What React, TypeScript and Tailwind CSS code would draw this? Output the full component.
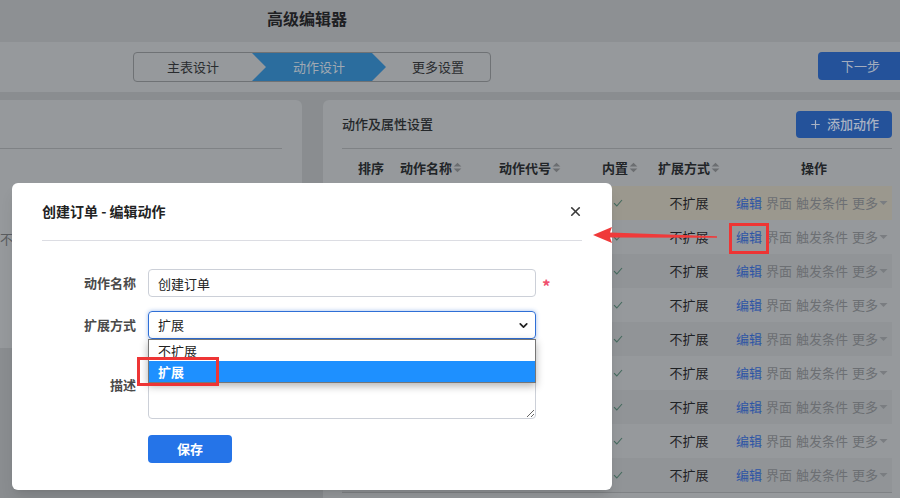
import { X, ChevronDown, Plus } from "lucide-react";

const rows = [0, 1, 2, 3, 4, 5, 6, 7, 8];

const SortIcon = () => (
  <svg width="9" height="11" viewBox="0 0 9 11" className="ml-[1px] inline-block">
    <path d="M4.5 0.8 L8.3 4.6 H0.7 Z" fill="#6b6e71" />
    <path d="M4.5 10.2 L8.3 6.4 H0.7 Z" fill="#6b6e71" />
  </svg>
);

const Check = () => (
  <svg width="10" height="8" viewBox="0 0 10 8">
    <polyline points="1,4.2 3.8,7 9,1" fill="none" stroke="#456a5e" strokeWidth="1.1" />
  </svg>
);

const App = () => {
  return (
    <div className="relative h-[498px] w-[900px] overflow-hidden bg-[#8a8d90] font-['Noto_Sans_CJK_SC',sans-serif] text-[13px] text-[#1f2225]">
      {/* top title */}
      <header className="flex h-[42px] bg-[#8d9093]">
        <div className="flex w-[614px] items-center justify-center pb-[6px] text-[16px] font-bold text-[#1e2023]">
          高级编辑器
        </div>
      </header>

      {/* steps bar */}
      <div className="flex h-[50px] items-start bg-[#96999c] pt-[10px]">
        <div className="ml-[133px] flex h-[30px] w-[358px] overflow-hidden rounded-[4px] border border-[#6f7275]">
          <div className="flex w-[118px] items-center justify-center text-[#2a2c2f]">主表设计</div>
          <div className="flex w-[134px] items-center justify-center bg-[#2b6d9e] text-[#a0a9b2] [clip-path:polygon(0_0,120px_0,134px_50%,120px_100%,0_100%,14px_50%)]">
            动作设计
          </div>
          <div className="flex flex-1 items-center justify-center text-[#2a2c2f]">更多设置</div>
        </div>
        <button className="ml-auto -mr-[3px] flex h-[28px] w-[85px] items-center justify-center rounded-[4px] bg-[#24529a] text-[#a3acbd]">
          下一步
        </button>
      </div>

      {/* content */}
      <div className="flex gap-[21px] pt-[8px]">
        <div className="h-[248px] w-[302px] shrink-0 rounded-r-[6px] bg-[#96999c] pr-[20px]">
          <div className="h-[49px] border-b border-[#7f8285]" />
          <div className="pt-[80px] text-[#5a5d60]">不支持</div>
        </div>

        <div className="h-[420px] w-[588px] shrink-0 rounded-tl-[6px] bg-[#96999c] px-[19px]">
          <div className="flex h-[49px] items-center justify-between border-b border-[#7f8285]">
            <span className="font-medium text-[#24272a]">动作及属性设置</span>
            <button className="flex h-[27px] w-[96px] items-center justify-center gap-[5px] rounded-[4px] bg-[#24529a] font-medium text-[#a9b2c4]">
              <Plus size={13} strokeWidth={2.2} />
              添加动作
            </button>
          </div>

          <div className="grid h-[37px] grid-cols-[58px_62px_136px_44px_94px_1fr] items-center font-bold text-[#222528]">
            <div className="text-center">排序</div>
            <div className="flex items-center justify-center">动作名称<SortIcon /></div>
            <div className="flex items-center justify-center">动作代号<SortIcon /></div>
            <div className="flex items-center justify-center">内置<SortIcon /></div>
            <div className="flex items-center justify-center">扩展方式<SortIcon /></div>
            <div className="text-center">操作</div>
          </div>

          <div className="border-b border-[#7f8285]">
            {rows.map((i) => (
              <div
                key={i}
                className={
                  i === 0
                    ? "grid h-[34px] grid-cols-[58px_62px_136px_44px_94px_1fr] items-center bg-[#9b988e]"
                    : i % 2 === 0
                      ? "grid h-[34px] grid-cols-[58px_62px_136px_44px_94px_1fr] items-center bg-[#919497]"
                      : "grid h-[34px] grid-cols-[58px_62px_136px_44px_94px_1fr] items-center"
                }
              >
                <div />
                <div />
                <div />
                <div className="flex justify-center pr-[4px]">
                  <Check />
                </div>
                <div className="text-center text-[#1e2124]">不扩展</div>
                <div className="flex items-center gap-[4px] text-[#6c6f73]">
                  <span className="text-[#2d55a5]">编辑</span>
                  <span>界面</span>
                  <span>触发条件</span>
                  <span className="flex items-center">
                    更多
                    <svg width="9" height="6" viewBox="0 0 9 6" className="ml-[1px]">
                      <path d="M0.5 1 H8.5 L4.5 5 Z" fill="#7a7d81" />
                    </svg>
                  </span>
                </div>
              </div>
            ))}
          </div>
        </div>
      </div>

      {/* dialog */}
      <div className="absolute left-[12px] top-[183px] h-[307px] w-[600px] rounded-[6px] bg-white px-[30px] shadow-lg">
        <div className="flex h-[58px] items-center justify-between border-b border-[#dcdde3]">
          <span className="text-[14px] font-bold text-[#222]">创建订单 - 编辑动作</span>
          <X size={15} strokeWidth={2.6} className="-mr-[1px] text-[#3a3a3a]" />
        </div>

        <div className="flex flex-col pt-[28px]">
          <div className="flex items-center">
            <label className="w-[94px] text-right font-bold text-[#4a4a4a]">动作名称</label>
            <input
              readOnly
              value="创建订单"
              className="ml-[12px] h-[28px] w-[388px] rounded-[4px] border border-[#ccd0d8] px-[9px] text-[13px] text-[#222] outline-none"
            />
            <span className="ml-[6px] mt-[4px] text-[17px] font-bold leading-none text-[#f0506e]">*</span>
          </div>

          <div className="mt-[14px] flex items-center">
            <label className="w-[94px] text-right font-bold text-[#4a4a4a]">扩展方式</label>
            <div className="relative ml-[12px] w-[388px]">
              <div className="flex h-[28px] items-center justify-between rounded-[4px] border border-[#2f6fd6] pl-[9px] pr-[5px] text-[#222] shadow-[0_0_4px_rgba(47,111,214,0.45)]">
                扩展
                <ChevronDown size={13} strokeWidth={3.2} className="text-[#222]" />
              </div>
              <div className="absolute left-0 top-[28px] z-10 w-[388px] border border-[#767676] bg-white shadow-[0_3px_8px_rgba(0,0,0,0.3)]">
                <div className="flex h-[21px] items-center pl-[9px] text-[#222]">不扩展</div>
                <div className="flex h-[21px] items-center bg-[#1e90ff] pl-[9px] font-bold text-white">扩展</div>
              </div>
            </div>
          </div>

          <div className="mt-[12px] flex items-center">
            <label className="w-[94px] text-right font-bold text-[#4a4a4a]">描述</label>
            <textarea
              readOnly
              className="ml-[12px] h-[68px] w-[388px] rounded-[4px] border border-[#ccd0d8] outline-none"
            />
          </div>

          <div className="mt-[16px] pl-[106px]">
            <button className="flex h-[28px] w-[84px] items-center justify-center rounded-[4px] bg-[#2574e8] font-bold text-white">
              保存
            </button>
          </div>
        </div>
      </div>

      {/* annotations */}
      <div className="absolute left-[137px] top-[357px] z-20 h-[29px] w-[82px] border-[3px] border-[#ee3535]" />
      <div className="absolute left-[729px] top-[223px] h-[31px] w-[40px] border-[3px] border-[#ee3535]" />
      <svg className="absolute left-[590px] top-[224px]" width="130" height="22" viewBox="0 0 130 22">
        <path d="M3 11 L22 3 L20 8.5 L127 12.3 L127 13.7 L20 13.5 L22 19 Z" fill="#f03a3a" />
      </svg>
    </div>
  );
};

export default App;
